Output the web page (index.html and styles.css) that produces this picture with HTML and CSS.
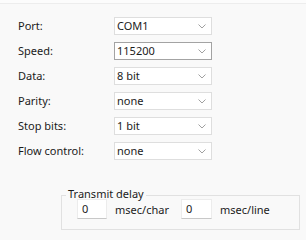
FILE: index.html
```html
<!DOCTYPE html>
<html>
<head>
<meta charset="utf-8">
<link rel="stylesheet" href="styles.css">
</head>
<body>
<div class="topline"></div>
<div class="form">
  <div class="row"><span class="label">Port:</span><div class="combo"><span>COM1</span><svg class="chev" width="8" height="5" viewBox="0 0 8 5"><path d="M0.5 0.5 L4 4 L7.5 0.5" fill="none" stroke="#a0a0a0" stroke-width="1"/></svg></div></div>
  <div class="row"><span class="label">Speed:</span><div class="combo focus"><span>115200</span><svg class="chev" width="8" height="5" viewBox="0 0 8 5"><path d="M0.5 0.5 L4 4 L7.5 0.5" fill="none" stroke="#a0a0a0" stroke-width="1"/></svg></div></div>
  <div class="row"><span class="label">Data:</span><div class="combo"><span>8 bit</span><svg class="chev" width="8" height="5" viewBox="0 0 8 5"><path d="M0.5 0.5 L4 4 L7.5 0.5" fill="none" stroke="#a0a0a0" stroke-width="1"/></svg></div></div>
  <div class="row"><span class="label">Parity:</span><div class="combo"><span>none</span><svg class="chev" width="8" height="5" viewBox="0 0 8 5"><path d="M0.5 0.5 L4 4 L7.5 0.5" fill="none" stroke="#a0a0a0" stroke-width="1"/></svg></div></div>
  <div class="row"><span class="label">Stop bits:</span><div class="combo"><span>1 bit</span><svg class="chev" width="8" height="5" viewBox="0 0 8 5"><path d="M0.5 0.5 L4 4 L7.5 0.5" fill="none" stroke="#a0a0a0" stroke-width="1"/></svg></div></div>
  <div class="row"><span class="label">Flow control:</span><div class="combo"><span>none</span><svg class="chev" width="8" height="5" viewBox="0 0 8 5"><path d="M0.5 0.5 L4 4 L7.5 0.5" fill="none" stroke="#a0a0a0" stroke-width="1"/></svg></div></div>
</div>
<div class="group">
  <span class="legend">Transmit delay</span>
  <div class="delays">
    <div class="field">0</div><span class="unit u1">msec/char</span>
    <div class="field f2">0</div><span class="unit">msec/line</span>
  </div>
</div>
</body>
</html>
```
FILE: styles.css
```css
html, body { margin: 0; padding: 0; }
body {
  background: #f9f9f9;
  font-family: "Noto Sans", "Open Sans", sans-serif;
  font-size: 11px;
  color: #1b1b1b;
  width: 306px;
  height: 240px;
  overflow: hidden;
}
.topline {
  height: 3px;
  background: #fcfcfc;
  border-bottom: 1px solid #ededed;
}
.form {
  padding: 13px 0 0 18px;
  display: flex;
  flex-direction: column;
  gap: 7px;
}
.row {
  display: flex;
  align-items: center;
  height: 18px;
}
.label {
  width: 96px;
  line-height: 18px;
}
.combo {
  box-sizing: border-box;
  width: 98px;
  height: 18px;
  background: #fff;
  border: 1px solid #dedede;
  display: flex;
  align-items: center;
  justify-content: space-between;
  padding: 0 5px 0 2px;
  line-height: 16px;
}
.combo.focus { border-color: #a3a3a3; }
.chev { display: block; }
.group {
  position: relative;
  margin: 35px 0 0 61px;
  width: 239px;
  box-sizing: border-box;
  border: 1px solid #e1e1e1;
  padding: 3px 0 10px 15px;
}
.legend {
  position: absolute;
  top: -8px;
  left: 4px;
  padding: 0 2px;
  line-height: 11px;
  font-size: 11px;
  background: #f9f9f9;
}
.delays {
  display: flex;
  align-items: center;
  height: 20px;
}
.field {
  box-sizing: border-box;
  width: 30px;
  height: 20px;
  background: #fff;
  border: 1px solid #ececec;
  border-bottom-color: #c8c8c8;
  padding-left: 4px;
  line-height: 18px;
}
.field.f2 { width: 31px; }
.unit { margin-left: 8px; }
.unit.u1 { width: 66px; }
```
